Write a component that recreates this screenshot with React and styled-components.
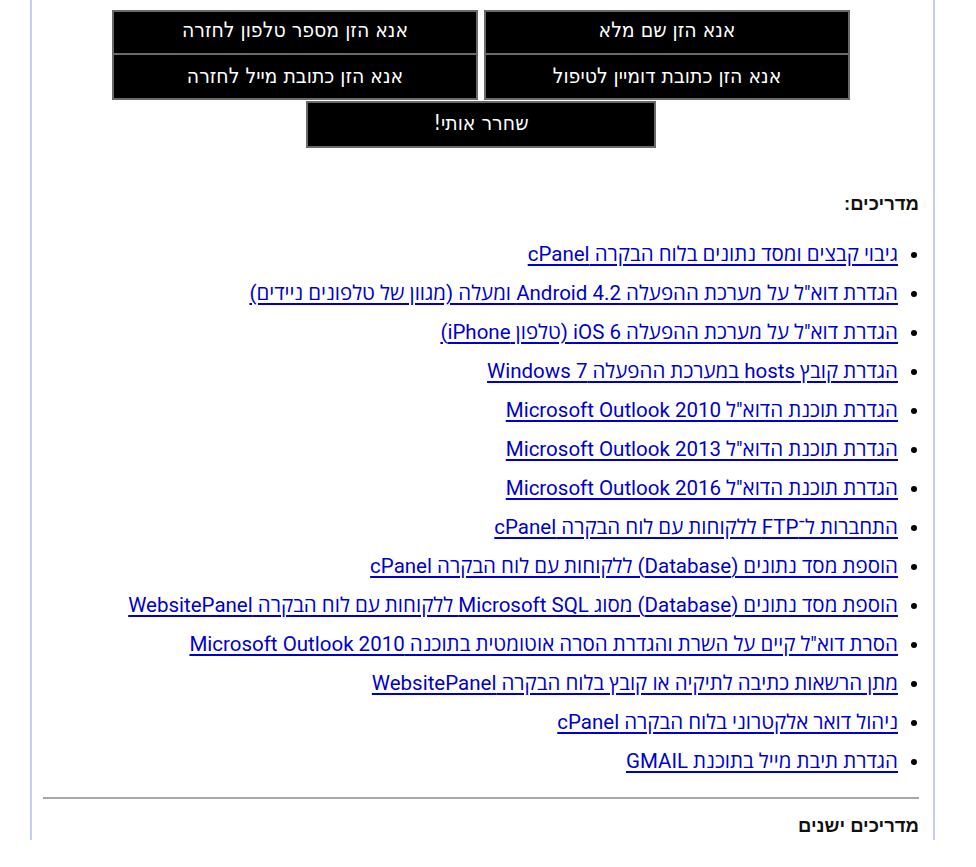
import React from "react";
import styled, { createGlobalStyle } from "styled-components";

const Global = createGlobalStyle`
  html, body { margin: 0; padding: 0; background: #ffffff; }
  body { font-family: Roboto, "Open Sans", "Liberation Sans", sans-serif; }
`;

const Frame = styled.div`
  box-sizing: border-box;
  width: 905px;
  height: 840px;
  margin-left: 30px;
  border-left: 2px solid #c4cdf6;
  border-right: 2px solid #c4cdf6;
  padding: 10px 14px 0 11px;
  direction: rtl;
  overflow: hidden;
`;

const ButtonGrid = styled.div`
  display: grid;
  grid-template-columns: 366px 366px;
  column-gap: 6px;
  justify-content: center;
  direction: rtl;
`;

const ActionButton = styled.button`
  box-sizing: border-box;
  height: 45px;
  background: #000;
  color: #fff;
  border: 2px solid #6a6a6a;
  border-top-width: ${(p) => (p.$top ? "2px" : "0")};
  font-family: "DejaVu Sans Condensed", "DejaVu Sans", sans-serif;
  font-size: 21px;
  padding: 0 0 ${(p) => (p.$top ? "5px" : "1px")} 0;
  cursor: pointer;
`;

const SubmitRow = styled.div`
  display: flex;
  justify-content: center;
  margin-top: 1px;
`;

const SubmitButton = styled(ActionButton)`
  width: 350px;
  height: 47px;
  border-top-width: 2px;
  padding-bottom: 4px;
`;

const Heading = styled.h3`
  margin: ${(p) => p.$m};
  font-family: "Liberation Sans", Arial, sans-serif;
  font-weight: bold;
  font-size: 18.5px;
  line-height: 24px;
  color: #111;
`;

const GuideList = styled.ul`
  margin: 0;
  padding: 0 21px 0 0;
  list-style: disc;
`;

const GuideItem = styled.li`
  font-size: 20.5px;
  line-height: 39px;
  color: #000;
`;

const GuideLink = styled.a`
  color: #0000cc;
  text-decoration: underline;
  text-underline-offset: 3px;
  font-family: Roboto, "Open Sans", "Noto Sans", sans-serif;
`;

const Rule = styled.hr`
  margin: 16px 0 0 0;
  border: 0;
  border-top: 2px solid #a8a8a8;
  height: 0;
`;

const guides = [
  "גיבוי קבצים ומסד נתונים בלוח הבקרה cPanel",
  "הגדרת דוא\"ל על מערכת ההפעלה Android 4.2 ומעלה (מגוון של טלפונים ניידים)",
  "הגדרת דוא\"ל על מערכת ההפעלה iOS 6 (טלפון iPhone)",
  "הגדרת קובץ hosts במערכת ההפעלה Windows 7",
  "הגדרת תוכנת הדוא\"ל Microsoft Outlook 2010",
  "הגדרת תוכנת הדוא\"ל Microsoft Outlook 2013",
  "הגדרת תוכנת הדוא\"ל Microsoft Outlook 2016",
  "התחברות ל־FTP ללקוחות עם לוח הבקרה cPanel",
  "הוספת מסד נתונים (Database) ללקוחות עם לוח הבקרה cPanel",
  "הוספת מסד נתונים (Database) מסוג Microsoft SQL ללקוחות עם לוח הבקרה WebsitePanel",
  "הסרת דוא\"ל קיים על השרת והגדרת הסרה אוטומטית בתוכנה Microsoft Outlook 2010",
  "מתן הרשאות כתיבה לתיקיה או קובץ בלוח הבקרה WebsitePanel",
  "ניהול דואר אלקטרוני בלוח הבקרה cPanel",
  "הגדרת תיבת מייל בתוכנת GMAIL",
];

export default function App() {
  return (
    <>
      <Global />
      <Frame>
        <ButtonGrid>
          <ActionButton $top>אנא הזן שם מלא</ActionButton>
          <ActionButton $top>אנא הזן מספר טלפון לחזרה</ActionButton>
          <ActionButton>אנא הזן כתובת דומיין לטיפול</ActionButton>
          <ActionButton>אנא הזן כתובת מייל לחזרה</ActionButton>
        </ButtonGrid>
        <SubmitRow>
          <SubmitButton>שחרר אותי!</SubmitButton>
        </SubmitRow>
        <Heading $m="44px 0 19px 0">מדריכים:</Heading>
        <GuideList>
          {guides.map((g) => (
            <GuideItem key={g}>
              <GuideLink href="#">{g}</GuideLink>
            </GuideItem>
          ))}
        </GuideList>
        <Rule />
        <Heading $m="15px 0 0 0">מדריכים ישנים</Heading>
      </Frame>
    </>
  );
}
